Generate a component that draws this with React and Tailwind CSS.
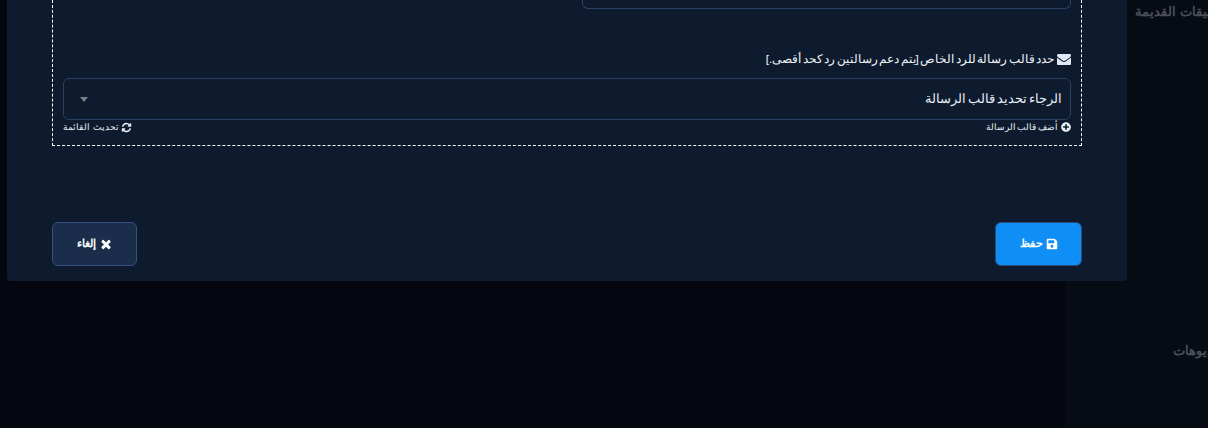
import { FaPlusCircle, FaSave } from 'react-icons/fa'

const FONT = "font-['Liberation_Sans',sans-serif]"

// Font Awesome 4 shapes, the icon packages only carry the newer ones
const Fa4Icon = ({ d, className }) => (
  <svg viewBox="0 0 1792 1792" fill="currentColor" className={className}>
    <path d={d} />
  </svg>
)

const ENVELOPE =
  'M1792 710v794q0 66-47 113t-113 47h-1472q-66 0-113-47t-47-113v-794q44 49 101 87 362 246 497 345 57 42 92.5 65.5t94.5 48 110 24.5h2q51 0 110-24.5t94.5-48 92.5-65.5q170-123 498-345 57-39 100-87zm0-294q0 79-49 151t-122 123q-376 261-468 325-10 7-42.5 30.5t-54 38-52 32.5-57.5 27-50 9h-2q-23 0-50-9t-57.5-27-52-32.5-54-38-42.5-30.5q-91-64-262-182.5t-205-142.5q-62-42-117-115.5t-55-136.5q0-78 41.5-130t118.5-52h1472q65 0 112.5 47t47.5 113z'
const REFRESH =
  'M1639 1056q0 5-1 7-64 268-268 434.5t-478 166.5q-146 0-282.5-55t-243.5-157l-129 129q-19 19-45 19t-45-19-19-45v-448q0-26 19-45t45-19h448q26 0 45 19t19 45-19 45l-137 137q71 66 161 102t187 36q134 0 250-65t186-179q11-17 53-117 8-23 30-23h192q13 0 22.5 9.5t9.5 22.5zm25-800v448q0 26-19 45t-45 19h-448q-26 0-45-19t-19-45 19-45l138-138q-148-137-349-137-134 0-250 65t-186 179q-11 17-53 117-8 23-30 23h-199q-13 0-22.5-9.5t-9.5-22.5v-7q65-268 270-434.5t480-166.5q146 0 284 55.5t245 156.5l130-129q19-19 45-19t45 19 19 45z'
const TIMES =
  'M1490 1322q0 40-28 68l-136 136q-28 28-68 28t-68-28l-294-294-294 294q-28 28-68 28t-68-28l-136-136q-28-28-28-68t28-68l294-294-294-294q-28-28-28-68t28-68l136-136q28-28 68-28t68 28l294 294 294-294q28-28 68-28t68 28l136 136q28 28 28 68t-28 68l-294 294 294 294q28 28 28 68z'

function SideLabel({ className, children }) {
  return (
    <p className={`whitespace-nowrap text-[13px] font-bold text-[#4a4f58] ${className}`}>{children}</p>
  )
}

export default function App() {
  return (
    <div dir="rtl" className={`relative flex h-[428px] w-[1208px] overflow-hidden bg-[#04070f] ${FONT}`}>
      {/* page sidebar behind the modal */}
      <aside className="h-full w-[143px] overflow-hidden bg-[#070b14]">
        <div className="-mr-[26px] pt-[3px]">
          <SideLabel className="leading-[18px]">التطبيقات القديمة</SideLabel>
          <SideLabel className="mt-[321px] mr-[1px] leading-[18px]">الفيديوهات</SideLabel>
        </div>
      </aside>

      {/* modal, its top is scrolled out of view */}
      <div className="absolute bottom-[147px] left-[7px] flex w-[1120px] flex-col rounded-b-[4px] bg-[#0e1a2d] px-[45px] pb-[15px]">
        <section className="border border-t-0 border-dashed border-white px-[10px] pb-[11px]">
          <div className="ml-[519px] h-[9px] rounded-b-[6px] border border-t-0 border-[#2a4060]" />

          <label className="mt-[41px] flex items-center gap-[3px] text-[11.7px] leading-[18px] font-normal text-[#eef2f7] [word-spacing:-1.8px]">
            <Fa4Icon d={ENVELOPE} className="size-[14px] shrink-0 text-[#dfe9f7]" />
            <span>حدد قالب رسالة للرد الخاص [يتم دعم رسالتين رد كحد أقصى.]</span>
          </label>

          <div className="mt-[10px] flex h-[42px] items-center justify-between rounded-[6px] border border-[#2a4060] pr-[8px] pl-[16px] text-[12.6px] font-normal text-[#e6edf5] [word-spacing:-1.6px]">
            <span>الرجاء تحديد قالب الرسالة</span>
            <span className="h-0 w-0 border-x-[4px] border-t-[5px] border-x-transparent border-t-[#7b7f86]" />
          </div>

          <div className="flex items-center justify-between text-[9.2px] leading-[14px] text-[#e8eef6]">
            <a className="flex items-center gap-[3px] [word-spacing:-1px]">
              <FaPlusCircle className="size-[10px]" />
              أضف قالب الرسالة
            </a>
            <a className="flex items-center gap-[2px]">
              <Fa4Icon d={REFRESH} className="size-[11px]" />
              تحديث القائمة
            </a>
          </div>
        </section>

        <div className="mt-[76px] flex items-center justify-between">
          <button
            type="button"
            className="flex h-[44px] w-[87px] items-center justify-center gap-[3px] rounded-[6px] border border-[#2a4a78] bg-[#0f8ef5] pb-[1px] text-[11px] font-bold text-white"
          >
            <FaSave className="size-[12px]" />
            حفظ
          </button>
          <button
            type="button"
            className="flex h-[44px] w-[85px] items-center justify-center gap-[3px] rounded-[6px] border border-[#34527c] bg-[#1a2e4c] pb-[1px] text-[11px] font-bold text-white"
          >
            <Fa4Icon d={TIMES} className="size-[14px]" />
            إلغاء
          </button>
        </div>
      </div>
    </div>
  )
}
